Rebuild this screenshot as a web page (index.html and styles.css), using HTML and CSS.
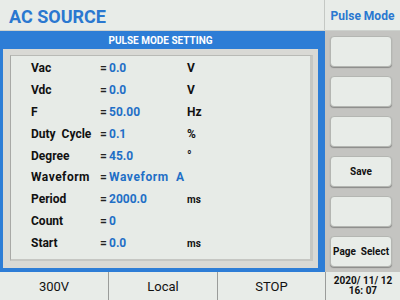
FILE: index.html
```html
<!DOCTYPE html>
<html>
  <head>
    <title>AC Source - Pulse Mode</title>
    <link rel="stylesheet" href="styles.css">
  </head>
  <body>
    <div class="screen">
      <div class="header">
        <div class="brand">AC SOURCE</div>
        <div class="mode">Pulse Mode</div>
      </div>

      <div class="main">
        <div class="panel">
          <div class="panel-title">PULSE MODE SETTING</div>
          <div class="frame">
            <div class="inner">
              <div class="row"><span class="label">Vac</span><span class="eq">=</span><span class="value">0.0</span><span class="unit">V</span></div>
              <div class="row"><span class="label">Vdc</span><span class="eq">=</span><span class="value">0.0</span><span class="unit">V</span></div>
              <div class="row"><span class="label">F</span><span class="eq">=</span><span class="value">50.00</span><span class="unit">Hz</span></div>
              <div class="row"><span class="label">Duty&nbsp; Cycle</span><span class="eq">=</span><span class="value">0.1</span><span class="unit">%</span></div>
              <div class="row"><span class="label">Degree</span><span class="eq">=</span><span class="value">45.0</span><span class="unit">°</span></div>
              <div class="row"><span class="label wide">Waveform</span><span class="eq">=</span><span class="value wide">Waveform&nbsp; A</span><span class="unit"></span></div>
              <div class="row"><span class="label">Period</span><span class="eq">=</span><span class="value">2000.0</span><span class="unit small">ms</span></div>
              <div class="row"><span class="label">Count</span><span class="eq">=</span><span class="value">0</span><span class="unit"></span></div>
              <div class="row"><span class="label">Start</span><span class="eq">=</span><span class="value">0.0</span><span class="unit small">ms</span></div>
            </div>
          </div>
        </div>

        <div class="side">
          <button class="key"></button>
          <button class="key"></button>
          <button class="key"></button>
          <button class="key">Save</button>
          <button class="key"></button>
          <button class="key">Page&nbsp; Select</button>
        </div>
      </div>

      <div class="status">
        <div class="cell">300V</div>
        <div class="cell">Local</div>
        <div class="cell">STOP</div>
        <div class="cell date">2020/ 11/ 12<br>16: 07</div>
      </div>
    </div>
  </body>
</html>
```

FILE: styles.css
```css
body {
  margin: 0;
  padding: 0;
  background: #e8ece8;
  font-family: Roboto, "Liberation Sans", sans-serif;
}

.screen {
  width: 400px;
  height: 300px;
  display: flex;
  flex-direction: column;
  overflow: hidden;
}

.header {
  height: 30px;
  display: flex;
  background: #e8ece8;
  border-bottom: 1px solid #cdd1cd;
}

.brand {
  width: 315px;
  padding: 2px 0 0 9px;
  border-right: 1px solid #c4c8c4;
  display: flex;
  align-items: center;
  color: #2a78d0;
  font-size: 18px;
  font-weight: bold;
}

.mode {
  flex: 1;
  padding-top: 2px;
  display: flex;
  align-items: center;
  justify-content: center;
  color: #2a78d0;
  font-size: 12px;
  font-weight: bold;
}

.main {
  height: 241px;
  display: flex;
}

.panel {
  width: 315px;
  background: #2d7dd6;
  padding: 0 7px 4px 3px;
  display: flex;
  flex-direction: column;
}

.panel-title {
  height: 17px;
  padding-top: 1px;
  display: flex;
  align-items: center;
  justify-content: center;
  color: #fff;
  font-size: 10px;
  font-weight: bold;
}

.frame {
  flex: 1;
  background: #d9d9d5;
  padding: 6px 5px 7px 7px;
  display: flex;
}

.inner {
  flex: 1;
  background: #e7ebe7;
  border-left: 1px solid #a8a9a6;
  border-top: 1px solid #b9bab6;
  border-right: 3px solid #c6c7c3;
  border-bottom: 2px solid #c6c7c3;
  padding-top: 1px;
}

.row {
  height: 21.9px;
  display: grid;
  grid-template-columns: 89px 9px 78px auto;
  align-items: center;
  font-size: 12px;
  font-weight: bold;
}

.label {
  padding-left: 20px;
  color: #111;
}

.label.wide {
  letter-spacing: 0.5px;
}

.eq {
  color: #222;
}

.value {
  color: #1f6fc6;
}

.value.wide {
  letter-spacing: 0.6px;
  white-space: nowrap;
}

.unit {
  color: #111;
}

.unit.small {
  font-size: 10px;
}

.side {
  flex: 1;
  background: #c4c4c1;
  padding: 5px 8px 0 5px;
  display: grid;
  grid-template-rows: repeat(6, 31px);
  row-gap: 9px;
}

.key {
  margin: 0;
  padding: 0;
  background: #e8ece8;
  border: 1px solid #b4b6b2;
  border-radius: 4px;
  box-shadow: 0 1px 1px #8a8a88;
  font-family: Roboto, "Liberation Sans", sans-serif;
  font-size: 10px;
  font-weight: bold;
  color: #111;
  white-space: nowrap;
}

.status {
  flex: 1;
  display: grid;
  grid-template-columns: 108px 109px 108px 75px;
  background: #e8ece8;
}

.cell {
  display: flex;
  align-items: center;
  justify-content: center;
  text-align: center;
  font-size: 13px;
  color: #111;
  border-left: 1px solid #9a9c9a;
}

.cell:first-child {
  border-left: none;
}

.cell.date {
  font-size: 10px;
  font-weight: bold;
  line-height: 10px;
}
```
